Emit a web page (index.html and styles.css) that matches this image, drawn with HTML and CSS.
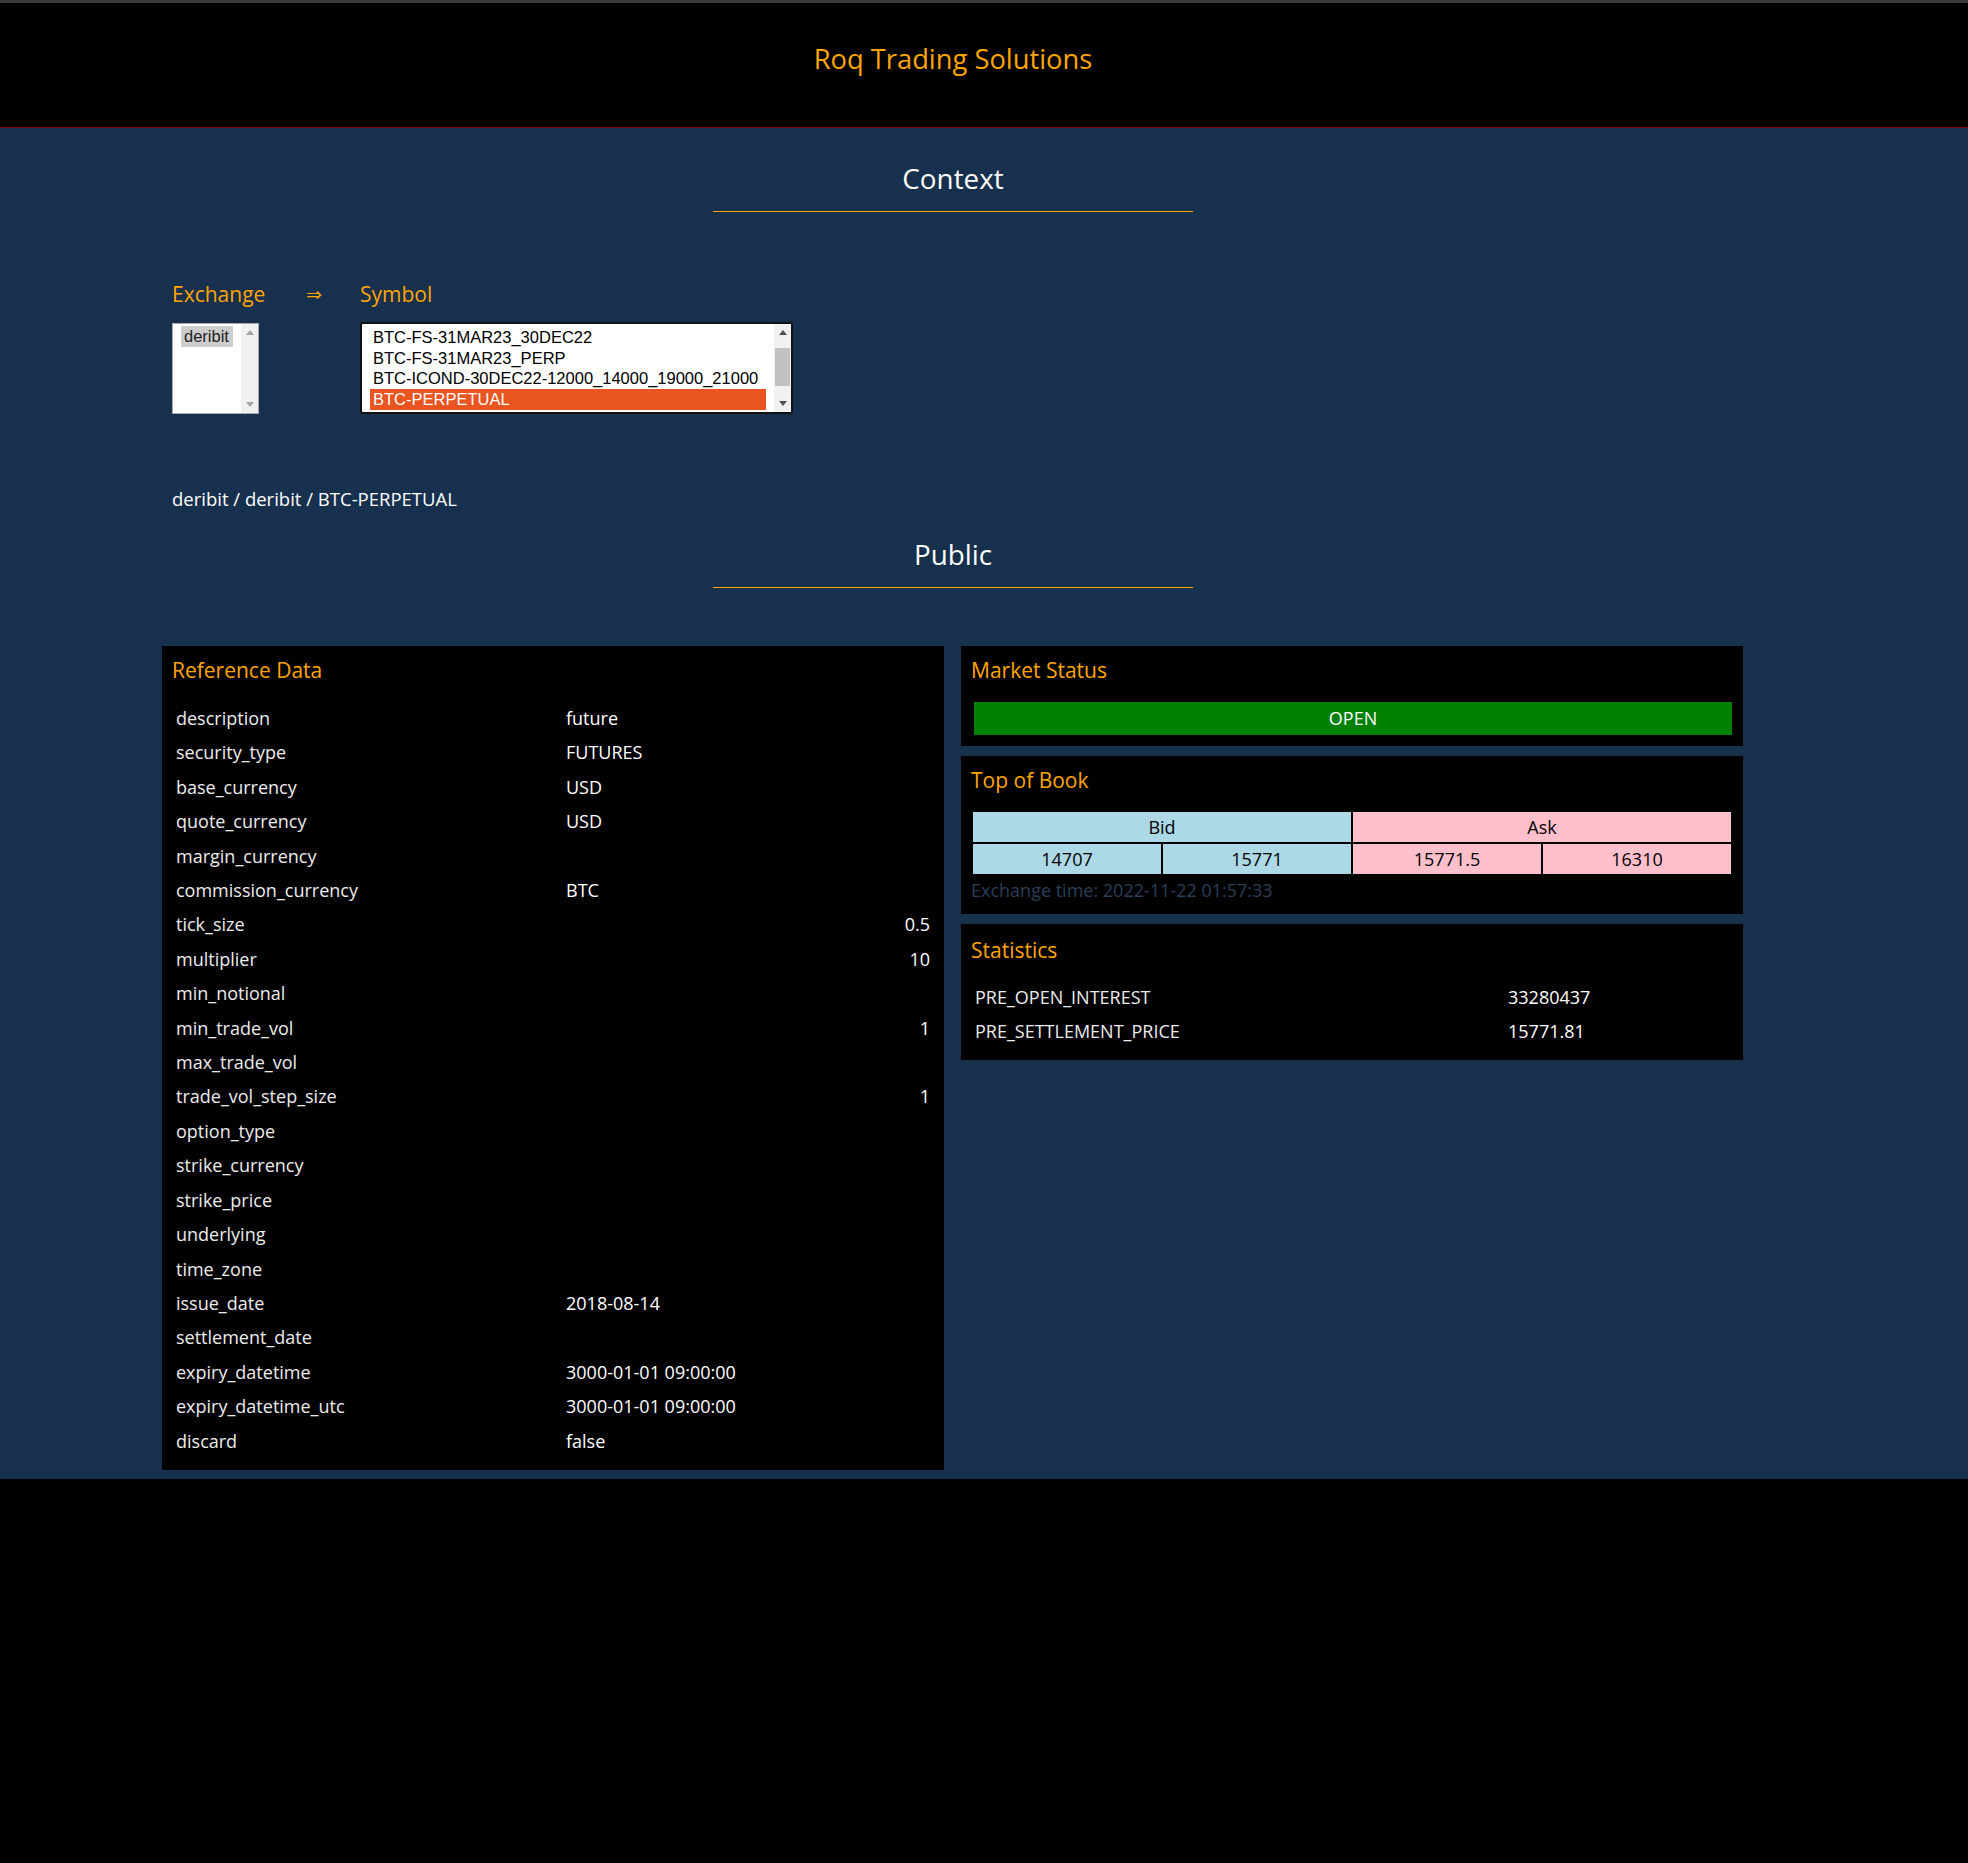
FILE: index.html
```html
<!DOCTYPE html>
<html lang="en">
<head>
<meta charset="utf-8">
<title>Roq Trading Solutions</title>
<link rel="stylesheet" href="styles.css">
</head>
<body>
<header class="topbar">
  <div class="wrap">
    <h1 class="brand">Roq Trading Solutions</h1>
  </div>
</header>
<main class="main">
  <div class="wrap">
    <section class="context">
      <h2 class="section-title">Context</h2>
      <hr class="rule">
      <div class="content">
        <div class="pickers">
          <div class="picker picker-exchange">
            <div class="picker-label">Exchange</div>
            <div class="listbox listbox-exchange">
              <div class="listbox-options">
                <div class="opt opt-dim">deribit</div>
              </div>
              <div class="scrollbar scrollbar-disabled">
                <div class="sb-btn"><svg width="8" height="5" viewBox="0 0 8 5"><polygon points="0,5 8,5 4,0"/></svg></div>
                <div class="sb-track"></div>
                <div class="sb-btn"><svg width="8" height="5" viewBox="0 0 8 5"><polygon points="0,0 8,0 4,5"/></svg></div>
              </div>
            </div>
          </div>
          <div class="picker-arrow">⇒</div>
          <div class="picker">
            <div class="picker-label">Symbol</div>
            <div class="listbox listbox-symbol">
              <div class="listbox-options">
                <div class="opt">BTC-FS-31MAR23_30DEC22</div>
                <div class="opt">BTC-FS-31MAR23_PERP</div>
                <div class="opt">BTC-ICOND-30DEC22-12000_14000_19000_21000</div>
                <div class="opt opt-active">BTC-PERPETUAL</div>
              </div>
              <div class="scrollbar">
                <div class="sb-btn"><svg width="8" height="5" viewBox="0 0 8 5"><polygon points="0,5 8,5 4,0"/></svg></div>
                <div class="sb-track"><div class="sb-thumb"></div></div>
                <div class="sb-btn"><svg width="8" height="5" viewBox="0 0 8 5"><polygon points="0,0 8,0 4,5"/></svg></div>
              </div>
            </div>
          </div>
        </div>
        <div class="path">deribit / deribit / BTC-PERPETUAL</div>
      </div>
    </section>

    <section class="public">
      <h2 class="section-title">Public</h2>
      <hr class="rule">
      <div class="content">
        <div class="panels">
          <div class="panel panel-ref">
            <h3 class="panel-title">Reference Data</h3>
            <table class="kv">
              <tr><td class="kv-key">description</td><td>future</td></tr>
              <tr><td class="kv-key">security_type</td><td>FUTURES</td></tr>
              <tr><td class="kv-key">base_currency</td><td>USD</td></tr>
              <tr><td class="kv-key">quote_currency</td><td>USD</td></tr>
              <tr><td class="kv-key">margin_currency</td><td></td></tr>
              <tr><td class="kv-key">commission_currency</td><td>BTC</td></tr>
              <tr><td class="kv-key">tick_size</td><td class="kv-num">0.5</td></tr>
              <tr><td class="kv-key">multiplier</td><td class="kv-num">10</td></tr>
              <tr><td class="kv-key">min_notional</td><td></td></tr>
              <tr><td class="kv-key">min_trade_vol</td><td class="kv-num">1</td></tr>
              <tr><td class="kv-key">max_trade_vol</td><td></td></tr>
              <tr><td class="kv-key">trade_vol_step_size</td><td class="kv-num">1</td></tr>
              <tr><td class="kv-key">option_type</td><td></td></tr>
              <tr><td class="kv-key">strike_currency</td><td></td></tr>
              <tr><td class="kv-key">strike_price</td><td></td></tr>
              <tr><td class="kv-key">underlying</td><td></td></tr>
              <tr><td class="kv-key">time_zone</td><td></td></tr>
              <tr><td class="kv-key">issue_date</td><td>2018-08-14</td></tr>
              <tr><td class="kv-key">settlement_date</td><td></td></tr>
              <tr><td class="kv-key">expiry_datetime</td><td>3000-01-01 09:00:00</td></tr>
              <tr><td class="kv-key">expiry_datetime_utc</td><td>3000-01-01 09:00:00</td></tr>
              <tr><td class="kv-key">discard</td><td>false</td></tr>
            </table>
          </div>
          <div class="right-col">
            <div class="panel">
              <h3 class="panel-title">Market Status</h3>
              <div class="status-bar">OPEN</div>
            </div>
            <div class="panel">
              <h3 class="panel-title">Top of Book</h3>
              <table class="book">
                <tr><td class="bid" colspan="2">Bid</td><td class="ask" colspan="2">Ask</td></tr>
                <tr><td class="bid">14707</td><td class="bid">15771</td><td class="ask">15771.5</td><td class="ask">16310</td></tr>
              </table>
              <div class="book-time">Exchange time: 2022-11-22 01:57:33</div>
            </div>
            <div class="panel panel-stats">
              <h3 class="panel-title">Statistics</h3>
              <table class="kv kv-stats">
                <tr><td class="kv-key">PRE_OPEN_INTEREST</td><td>33280437</td></tr>
                <tr><td class="kv-key">PRE_SETTLEMENT_PRICE</td><td>15771.81</td></tr>
              </table>
            </div>
          </div>
        </div>
      </div>
    </section>
  </div>
</main>
</body>
</html>
```
FILE: styles.css
```css
* {
  box-sizing: border-box;
}

html,
body {
  margin: 0;
  background: #000;
}

body {
  font-family: "Open Sans", "DejaVu Sans", sans-serif;
  font-size: 18px;
  color: #fff;
}

.wrap {
  width: 1906px;
}

/* Header */
.topbar {
  background: #000;
  border-top: 3px solid #3a3a3a;
  border-bottom: 1px solid #7d0a0a;
  padding: 38px 0 50px;
}

.brand {
  margin: 0;
  text-align: center;
  font-size: 27.3px;
  line-height: 36px;
  font-weight: 400;
  color: #ffa500;
}

/* Main */
.main {
  background: #17304d;
  padding: 32px 0 9px;
}

.section-title {
  margin: 0;
  text-align: center;
  font-size: 27.8px;
  line-height: 36px;
  font-weight: 400;
  color: #fff;
}

.rule {
  display: block;
  width: 480px;
  height: 0;
  margin: 15px auto 0;
  border: 0;
  border-top: 1px solid #ffa500;
}

.content {
  margin: 0 162px;
}

.public {
  margin-top: 25px;
}

/* Context pickers */
.pickers {
  display: flex;
  align-items: flex-start;
  margin-top: 68px;
  padding-left: 10px;
}

.picker-exchange {
  width: 95px;
}

.picker-label {
  font-size: 21px;
  line-height: 28px;
  color: #ffa500;
  white-space: nowrap;
}

.picker-arrow {
  width: 16px;
  margin: 0 38px 0 39px;
  font-family: "DejaVu Sans", sans-serif;
  font-size: 19px;
  line-height: 28px;
  color: #ffa500;
}

.listbox {
  display: flex;
  background: #fff;
  font-family: "Liberation Sans", Arial, sans-serif;
  font-size: 16.5px;
  color: #000;
  overflow: hidden;
}

.listbox-exchange {
  width: 87px;
  height: 91px;
  margin-top: 15px;
  border: 1px solid #a9a9a9;
}

.listbox-symbol {
  width: 433px;
  height: 92px;
  margin-top: 14px;
  border: 2px solid #111;
  border-radius: 3px;
}

.listbox-options {
  flex: 1;
  min-width: 0;
  padding: 2px 8px 0;
  overflow: hidden;
}

.listbox-symbol .listbox-options {
  padding-top: 2.6px;
}

.opt {
  line-height: 20.9px;
  padding: 0 3px;
  white-space: nowrap;
}

.opt-dim {
  background: #cecece;
  color: #222;
}

.opt-active {
  background: #e95420;
  color: #fff;
}

.scrollbar {
  width: 17px;
  display: flex;
  flex-direction: column;
  background: #f1f1f1;
}

.sb-btn {
  height: 17px;
  display: flex;
  align-items: center;
  justify-content: center;
}

.sb-btn svg {
  fill: #505050;
}

.scrollbar-disabled .sb-btn svg {
  fill: #a3a3a3;
}

.sb-track {
  flex: 1;
  padding: 7px 1px 0;
}

.sb-thumb {
  height: 38px;
  background: #c1c1c1;
}

.path {
  margin-top: 73px;
  padding-left: 10px;
  font-size: 18.5px;
  line-height: 24px;
  color: #fff;
}

/* Panels */
.panels {
  display: grid;
  grid-template-columns: 782px 782px;
  column-gap: 17px;
  align-items: start;
  margin-top: 58px;
}

.right-col {
  display: flex;
  flex-direction: column;
  gap: 10px;
}

.panel {
  background: #000;
  padding: 10px;
}

.panel-ref {
  padding-bottom: 12px;
}

.panel-stats {
  padding-top: 12px;
  padding-bottom: 11px;
}

.panel-title {
  margin: 0;
  font-size: 21px;
  line-height: 28px;
  font-weight: 400;
  color: #ffa500;
}

.kv {
  width: 100%;
  border-collapse: collapse;
  margin-top: 17px;
}

.kv td {
  padding: 0 4px;
  height: 34.4px;
  line-height: 34.4px;
  white-space: nowrap;
  color: #fff;
}

.kv .kv-key {
  width: 390px;
  color: #ececec;
}

.kv-stats {
  margin-top: 16px;
}

.kv-stats .kv-key {
  width: 533px;
}

.kv .kv-num {
  text-align: right;
}

.status-bar {
  margin: 18px 1px 1px 3px;
  height: 33px;
  line-height: 33px;
  background: #008000;
  text-align: center;
  color: #fff;
}

.book {
  width: 100%;
  border-collapse: separate;
  border-spacing: 2px;
  margin-top: 16px;
  table-layout: fixed;
}

.book td {
  height: 30px;
  line-height: 30px;
  padding: 0;
  text-align: center;
  color: #000;
}

.book .bid {
  background: #add8e6;
}

.book .ask {
  background: #ffc0cb;
}

.book-time {
  line-height: 28px;
  color: #2b3f58;
}
```
